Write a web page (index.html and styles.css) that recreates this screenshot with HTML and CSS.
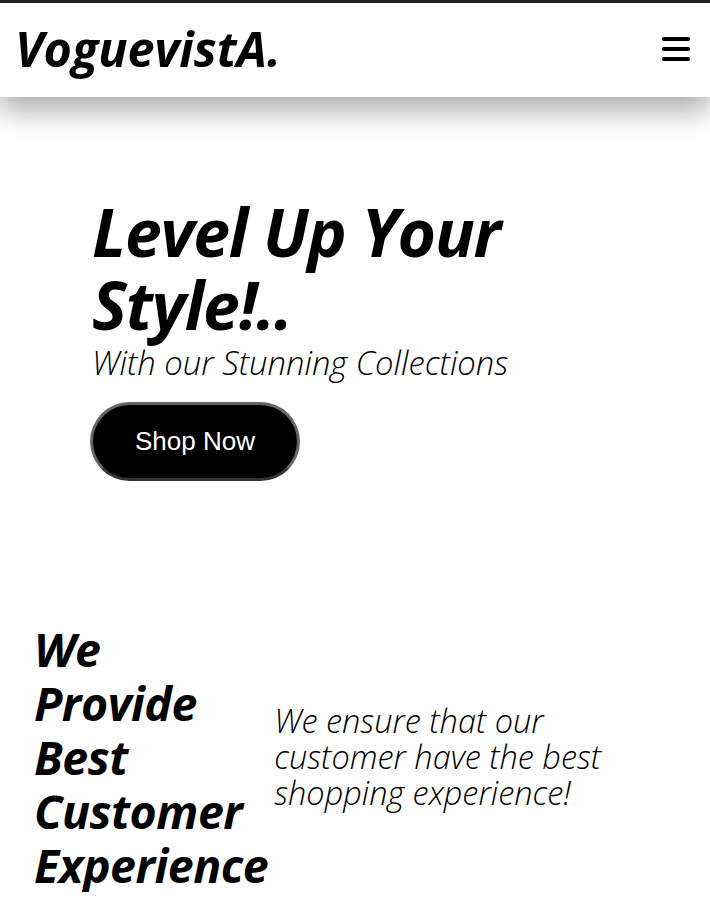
FILE: index.html
```html
<!DOCTYPE html>
<html lang="en">
<head>
<meta charset="utf-8">
<title>VoguevistA.</title>
<link rel="stylesheet" href="styles.css">
</head>
<body>
<header class="site-header">
  <div class="logo">VoguevistA.</div>
  <button class="menu-btn" aria-label="Menu">
    <svg width="28" height="26" viewBox="0 0 28 26"><g stroke="#000" stroke-width="4" stroke-linecap="round"><line x1="2" y1="3" x2="26" y2="3"/><line x1="2" y1="13" x2="26" y2="13"/><line x1="2" y1="23" x2="26" y2="23"/></g></svg>
  </button>
</header>
<main>
  <section class="hero">
    <h1 class="hero-title">Level Up Your Style!..</h1>
    <p class="hero-sub">With our Stunning Collections</p>
    <button class="shop-btn">Shop Now</button>
  </section>
  <section class="about">
    <h2 class="about-title">We<br>Provide<br>Best<br>Customer<br>Experience</h2>
    <p class="about-text">We ensure that our customer have the best shopping experience!</p>
  </section>
</main>
</body>
</html>
```
FILE: styles.css
```css
html, body {
  margin: 0;
  padding: 0;
  background: #fff;
}
body {
  border-top: 3px solid #222;
  font-family: "Open Sans", "Noto Sans", sans-serif;
  color: #000;
  overflow: hidden;
}
.site-header {
  height: 94px;
  display: flex;
  align-items: center;
  justify-content: space-between;
  padding: 0 20px 0 15px;
  background: #fff;
  box-shadow: 0 14px 26px rgba(0, 0, 0, 0.32);
  position: relative;
  z-index: 1;
}
.logo {
  font-size: 48.5px;
  font-weight: 700;
  font-style: italic;
  letter-spacing: 0;
  line-height: 1;
  margin-top: -3px;
}
.menu-btn {
  border: 0;
  background: none;
  padding: 0;
  display: flex;
  margin-top: -2px;
}
.hero {
  padding-left: 92px;
  padding-top: 98px;
}
.hero-title {
  margin: 0;
  font-size: 66px;
  line-height: 73px;
  font-weight: 700;
  font-style: italic;
  letter-spacing: -1.2px;
  width: 440px;
}
.hero-sub {
  margin: 0;
  font-size: 32.8px;
  line-height: 40px;
  font-weight: 300;
  font-style: italic;
  letter-spacing: 0;
  position: relative;
  top: 2px;
}
.shop-btn {
  margin-top: 21px;
  margin-left: -2px;
  width: 210px;
  height: 79px;
  border-radius: 40px;
  background: #000;
  color: #fff;
  border: 3px solid #666;
  border-bottom-color: #333;
  font-family: "Liberation Sans", Arial, sans-serif;
  font-size: 26px;
  cursor: pointer;
}
.about {
  display: flex;
  align-items: center;
  padding-left: 34px;
  margin-top: 141px;
}
.about-title {
  margin: 0;
  font-size: 46.5px;
  line-height: 54px;
  font-weight: 700;
  font-style: italic;
  letter-spacing: -0.5px;
}
.about-text {
  margin: 0 0 0 6px;
  width: 350px;
  font-size: 32.5px;
  line-height: 36px;
  font-weight: 300;
  font-style: italic;
  letter-spacing: 0;
}
```
